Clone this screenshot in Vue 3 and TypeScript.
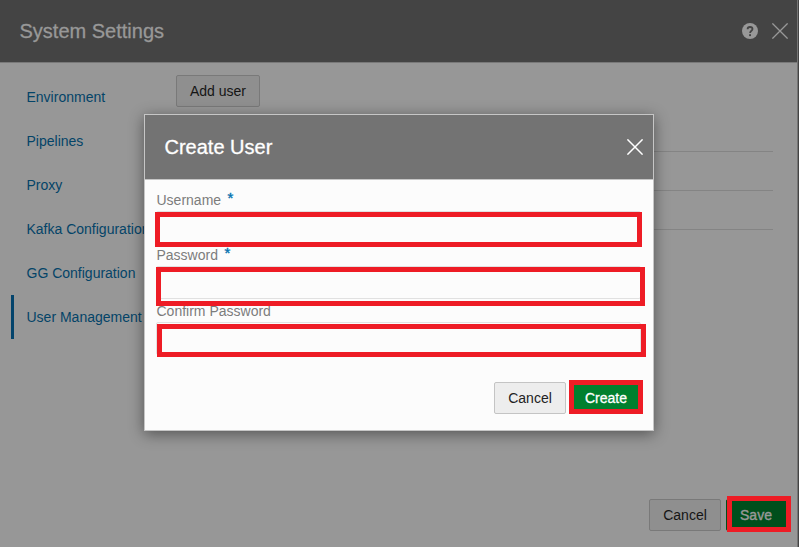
<script setup lang="ts">
import { ref } from 'vue'

interface Field {
  id: string
  label: string
  type: string
  required: boolean
}

const sections: string[] = [
  'Environment',
  'Pipelines',
  'Proxy',
  'Kafka Configuration',
  'GG Configuration',
  'User Management',
]
const active = ref('User Management')

const fields: Field[] = [
  { id: 'username', label: 'Username', type: 'text', required: true },
  { id: 'password', label: 'Password', type: 'password', required: true },
  { id: 'confirm', label: 'Confirm Password', type: 'password', required: false },
]
const values = ref<Record<string, string>>({ username: '', password: '', confirm: '' })
</script>

<template>
  <div class="screen">
    <section class="settings">
      <header class="settings-header">
        <h1 class="title">System Settings</h1>
        <div class="header-tools">
          <svg class="help" viewBox="0 0 16 16" width="16" height="16">
            <circle cx="8" cy="8" r="8" fill="#989898" />
            <path d="M5.6 6.3C5.6 4.8 6.6 4 8 4s2.5.8 2.5 2.1c0 1.6-2.4 1.8-2.4 3.9" fill="none" stroke="#444" stroke-width="1.8" />
            <rect x="7.1" y="11.2" width="1.9" height="1.9" fill="#444" />
          </svg>
          <svg class="close" viewBox="0 0 16 16" width="16" height="16">
            <path d="M.4.4l15.2 15.2M15.6.4L.4 15.6" stroke="#989898" stroke-width="1.3" />
          </svg>
        </div>
      </header>
      <div class="settings-body">
        <nav class="sidebar">
          <a
            v-for="name in sections"
            :key="name"
            class="nav-item"
            :class="{ active: name === active }"
            @click="active = name"
          >{{ name }}</a>
        </nav>
        <main class="content">
          <button class="btn dim add">Add user</button>
          <div class="table">
            <div v-for="n in 3" :key="n" class="row"></div>
          </div>
        </main>
      </div>
      <footer class="settings-footer">
        <button class="btn dim">Cancel</button>
        <div class="marked">
          <button class="btn save">Save</button>
          <span class="mark mark-save"></span>
        </div>
      </footer>
    </section>
    <div class="edge"></div>

    <div class="dialog" role="dialog">
      <header class="dialog-header">
        <h2 class="title">Create User</h2>
        <svg class="close" viewBox="0 0 16 16" width="16" height="16">
          <path d="M.4.4l15.2 15.2M15.6.4L.4 15.6" stroke="#fff" stroke-width="1.5" />
        </svg>
      </header>
      <form class="form" @submit.prevent>
        <div v-for="f in fields" :key="f.id" class="field" :class="f.id">
          <label class="label" :for="f.id">{{ f.label }}<span v-if="f.required" class="star">*</span></label>
          <div class="marked">
            <input :id="f.id" v-model="values[f.id]" class="input" :type="f.type" />
            <span class="mark" :class="'mark-' + f.id"></span>
          </div>
        </div>
      </form>
      <footer class="dialog-footer">
        <button class="btn">Cancel</button>
        <div class="marked">
          <button class="btn create">Create</button>
          <span class="mark mark-create"></span>
        </div>
      </footer>
    </div>
  </div>
</template>

<style>
body {
  margin: 0;
  overflow: hidden;
}
</style>

<style scoped>
.screen {
  position: relative;
  display: flex;
  width: 799px;
  height: 547px;
  overflow: hidden;
  font-family: 'Liberation Sans', Arial, sans-serif;
  font-size: 14px;
}
.screen * {
  box-sizing: border-box;
}
.settings {
  display: flex;
  flex-direction: column;
  width: 798px;
  background: #979797;
  border-right: 1px solid #747474;
}
.edge {
  width: 1px;
  background: #444;
}
.settings-header {
  display: flex;
  align-items: center;
  justify-content: space-between;
  height: 63px;
  padding: 0 9px 0 19.5px;
  background: #444;
  border-bottom: 1px solid #797979;
}
.title {
  margin: 0;
  font-size: 20px;
  line-height: 24px;
  font-weight: 400;
  color: #989898;
  -webkit-text-stroke: 0.3px currentColor;
}
.header-tools {
  display: flex;
  gap: 14px;
}
.help,
.close {
  display: block;
}
.settings-body {
  display: flex;
  flex: 1;
}
.sidebar {
  display: flex;
  flex-direction: column;
  width: 165px;
  padding: 12px 0 0 11px;
}
.nav-item {
  height: 44px;
  padding-left: 12.5px;
  border-left: 3px solid transparent;
  line-height: 45px;
  white-space: nowrap;
  color: #044468;
}
.nav-item.active {
  border-left-color: #04446c;
}
.content {
  width: 608px;
  padding: 12px 0 0 11px;
}
.table {
  margin-top: 6px;
}
.row {
  height: 39px;
  border-bottom: 1px solid #848484;
}
.settings-footer {
  display: flex;
  gap: 5px;
  justify-content: flex-end;
  height: 48px;
  padding-right: 9px;
}
.btn {
  display: block;
  width: 72px;
  height: 32px;
  margin: 0;
  padding: 0;
  border: 1px solid #c4c4c4;
  border-radius: 2px;
  background: #ededed;
  color: #222;
  font-family: inherit;
  font-size: 14px;
}
.btn.dim {
  border-color: #797979;
  background: #8f8f8f;
  color: #151515;
}
.btn.add {
  width: 84px;
}
.btn.save {
  width: 62px;
  padding-right: 2px;
  border-color: #004f1c;
  background: #004f1c;
  color: #989898;
  -webkit-text-stroke: 0.4px currentColor;
}
.btn.create {
  width: 70px;
  border-color: #00802e;
  background: #00802e;
  color: #fff;
  -webkit-text-stroke: 0.3px currentColor;
}
.dialog {
  position: absolute;
  left: 144px;
  top: 114px;
  display: flex;
  flex-direction: column;
  width: 510px;
  height: 317px;
  border: 1px solid #c6c6c6;
  background: #fcfcfc;
  box-shadow: 0 3px 14px rgba(0, 0, 0, 0.45);
}
.dialog-header {
  display: flex;
  align-items: center;
  justify-content: space-between;
  height: 65px;
  padding: 0 10px 0 19.5px;
  background: #737373;
  border-bottom: 1px solid #c6c6c6;
}
.dialog-header .title {
  color: #fff;
}
.form {
  flex: 1;
  padding: 12px 12px 0 11px;
}
.field {
  height: 55px;
}
.field.password {
  height: 56px;
}
.label {
  display: flex;
  height: 19px;
  padding-left: 0.5px;
  line-height: 17px;
  color: #7c7c7c;
}
.star {
  margin: -3px 0 0 6.5px;
  color: #0572b0;
  font-size: 15px;
  -webkit-text-stroke: 0.4px currentColor;
}
.marked {
  position: relative;
}
.input {
  display: block;
  width: 485px;
  height: 33px;
  padding: 0 8px;
  border: 1px solid #e1e1e1;
  border-radius: 2px;
  outline: none;
  background: #fcfcfc;
  font: inherit;
}
.mark {
  position: absolute;
  border: 5px solid #ee1c25;
  pointer-events: none;
}
.mark-username {
  left: -1px;
  top: 1px;
  width: 487px;
  height: 35px;
}
.mark-password {
  left: 0;
  top: 1px;
  width: 489px;
  height: 39px;
}
.mark-confirm {
  left: 1px;
  top: 2px;
  width: 489px;
  height: 33px;
}
.dialog-footer {
  display: flex;
  gap: 5px;
  justify-content: flex-end;
  height: 48px;
  padding-right: 12px;
}
.mark-create {
  left: -2px;
  top: -2px;
  width: 74px;
  height: 34px;
}
.mark-save {
  left: 1px;
  top: -3px;
  width: 64px;
  height: 36px;
}
</style>
